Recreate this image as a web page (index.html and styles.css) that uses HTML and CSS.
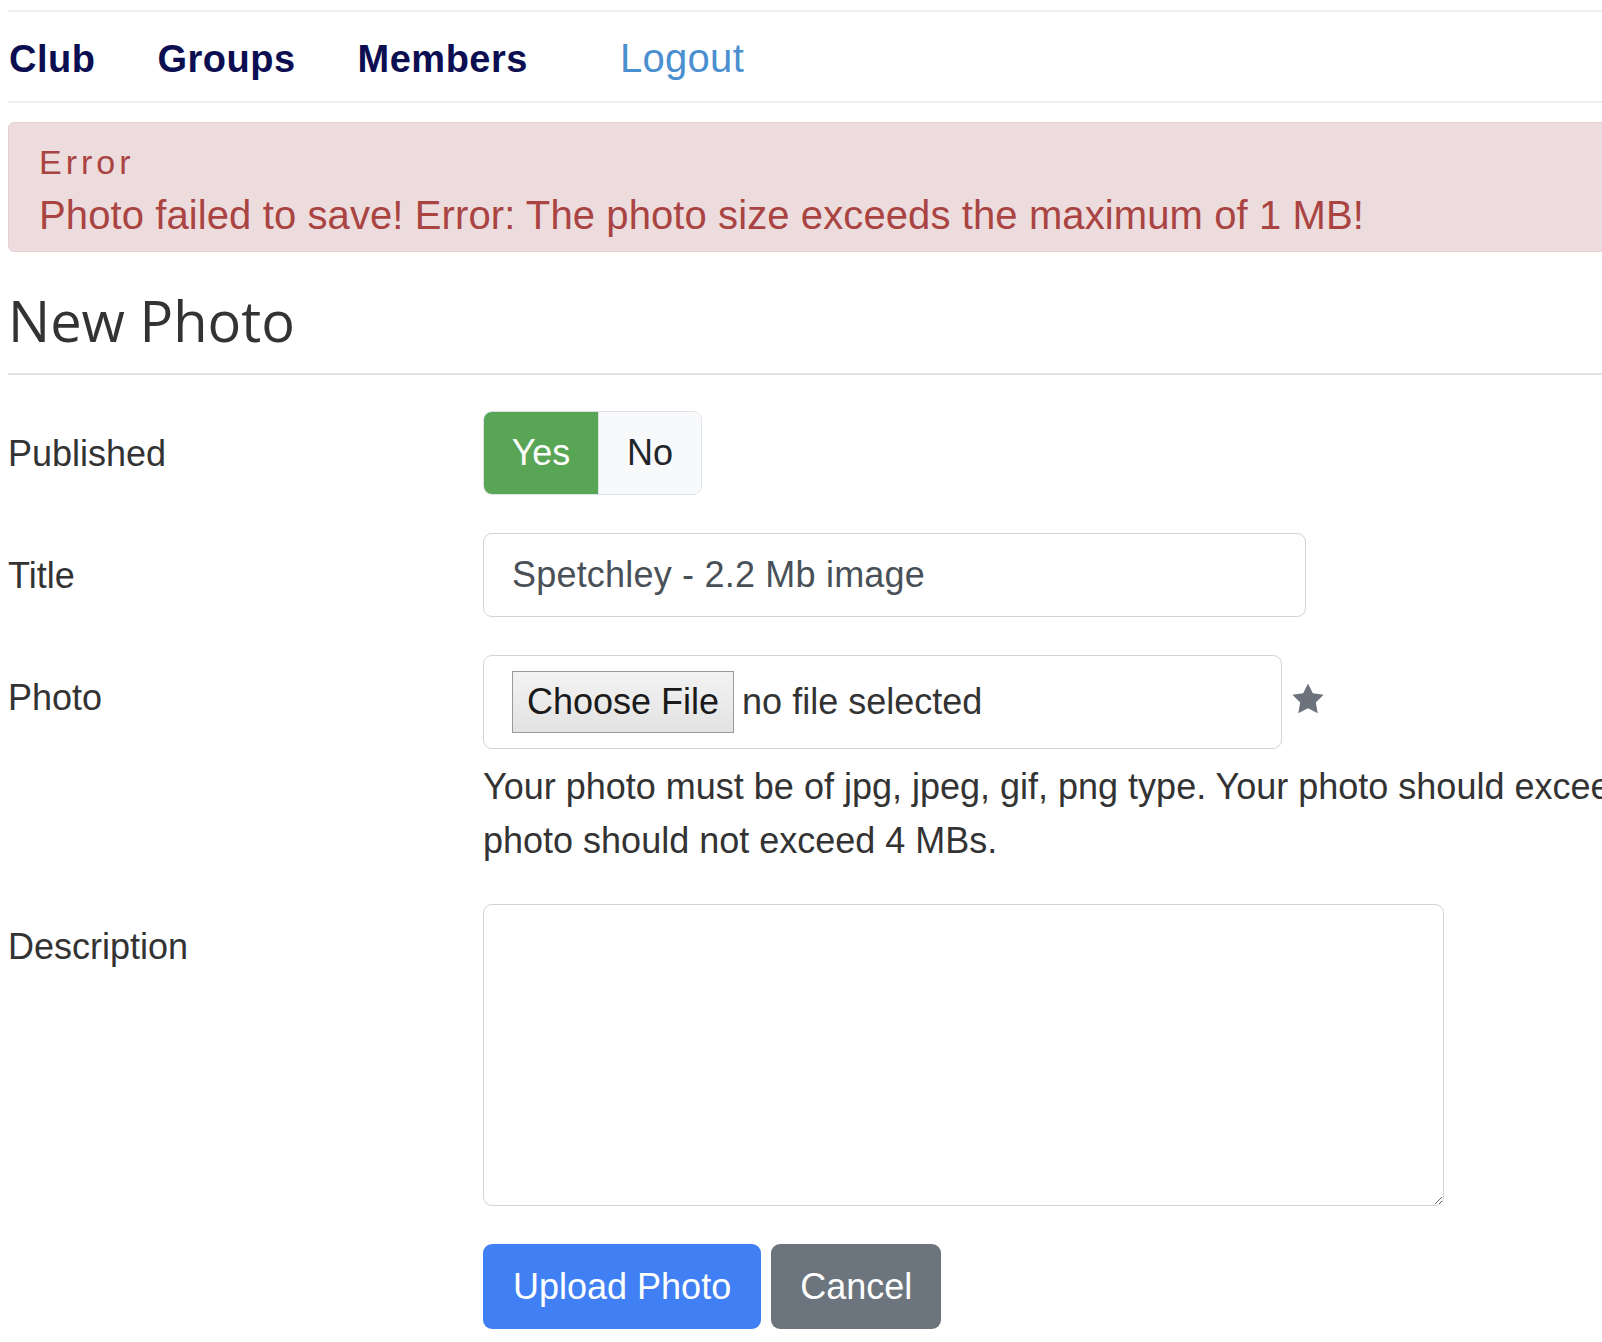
FILE: index.html
```html
<!DOCTYPE html>
<html lang="en">
<head>
<meta charset="utf-8">
<title>New Photo</title>
<link rel="stylesheet" href="styles.css">
</head>
<body>
<div class="page">
  <nav class="topnav">
    <a class="nav-link" href="#">Club</a>
    <a class="nav-link" href="#">Groups</a>
    <a class="nav-link" href="#">Members</a>
    <a class="nav-logout" href="#">Logout</a>
  </nav>

  <div class="alert">
    <div class="alert-title">Error</div>
    <div class="alert-msg">Photo failed to save! Error: The photo size exceeds the maximum of 1 MB!</div>
  </div>

  <h1 class="heading">New Photo</h1>
  <hr class="rule">

  <form class="form">
    <div class="row">
      <label class="col-label">Published</label>
      <div class="col-ctrl">
        <div class="toggle">
          <span class="toggle-btn toggle-yes">Yes</span>
          <span class="toggle-btn toggle-no">No</span>
        </div>
      </div>
    </div>

    <div class="row">
      <label class="col-label">Title</label>
      <div class="col-ctrl">
        <input class="text-input" type="text" value="Spetchley - 2.2 Mb image">
      </div>
    </div>

    <div class="row row-photo">
      <label class="col-label">Photo</label>
      <div class="col-ctrl">
        <div class="file-line">
          <div class="file-box">
            <span class="file-btn">Choose File</span>
            <span class="file-name">no file selected</span>
          </div>
          <svg class="star" viewBox="0 0 24 24" aria-hidden="true"><path d="M12 1.6l3.2 6.6 7.2 1-5.2 5.1 1.3 7.2L12 18.1l-6.5 3.4 1.3-7.2L1.6 9.2l7.2-1z"/></svg>
        </div>
        <p class="help">Your photo must be of jpg, jpeg, gif, png type. Your photo should exceed 100 KBs. Your<br>photo should not exceed 4 MBs.</p>
      </div>
    </div>

    <div class="row">
      <label class="col-label">Description</label>
      <div class="col-ctrl">
        <textarea class="textarea"></textarea>
      </div>
    </div>

    <div class="row">
      <div class="col-label"></div>
      <div class="col-ctrl actions">
        <button type="button" class="btn btn-primary">Upload Photo</button>
        <button type="button" class="btn btn-secondary">Cancel</button>
      </div>
    </div>
  </form>
</div>
</body>
</html>
```

FILE: styles.css
```css
html {
  overflow: hidden;
}

body {
  margin: 0;
  background: #fff;
  font-family: "Liberation Sans", Arial, sans-serif;
  color: #333;
}

.page {
  width: 1900px;
  padding-left: 8px;
  padding-top: 10px;
}

/* navigation */
.topnav {
  display: flex;
  align-items: baseline;
  border-top: 2px solid #eeeeee;
  border-bottom: 2px solid #eeeeee;
  padding: 18px 0 13px 1px;
  line-height: 57px;
}

.nav-link {
  font-size: 38px;
  font-weight: bold;
  letter-spacing: 0.5px;
  color: #0b0e50;
  text-decoration: none;
  margin-right: 62px;
}

.nav-link:nth-child(3) {
  margin-right: 92px;
}

.nav-logout {
  font-size: 40px;
  letter-spacing: 0.3px;
  color: #4a8fcf;
  text-decoration: none;
}

/* alert */
.alert {
  margin-top: 19px;
  background: #eddcdd;
  border: 1px solid #e6d0d3;
  border-radius: 6px;
  padding: 14px 30px 8px;
  color: #a94442;
}

.alert-title {
  font-size: 34px;
  line-height: 50px;
  letter-spacing: 4px;
}

.alert-msg {
  font-size: 40px;
  line-height: 56px;
  letter-spacing: 0.1px;
}

/* heading */
.heading {
  margin: 35px 0 0;
  font-family: "Open Sans", sans-serif;
  font-weight: 400;
  font-size: 56px;
  line-height: 67px;
  color: #333;
}

.rule {
  margin: 19px 0 0;
  border: 0;
  border-top: 2px solid #dfe3e6;
}

/* form */
.form {
  padding-top: 36px;
  font-size: 36px;
  line-height: 54px;
}

.row {
  display: flex;
  margin-bottom: 38px;
}

.row-photo {
  margin-bottom: 36px;
}

.col-label {
  width: 475px;
  flex: none;
  padding-top: 16px;
  color: #333;
}

.col-ctrl {
  flex: none;
}

/* toggle */
.toggle {
  display: inline-flex;
  border: 1px solid #dee2e6;
  border-radius: 9px;
  overflow: hidden;
  height: 84px;
  box-sizing: border-box;
}

.toggle-btn {
  display: flex;
  align-items: center;
  justify-content: center;
}

.toggle-yes {
  width: 114px;
  background: #59a556;
  color: #fff;
}

.toggle-no {
  width: 102px;
  background: #f8f9fa;
  border-left: 1px solid #dee2e6;
  color: #212529;
}

/* text input */
.text-input {
  display: block;
  box-sizing: border-box;
  width: 823px;
  height: 84px;
  margin: 0;
  padding: 0 28px;
  border: 1px solid #ced4da;
  border-radius: 9px;
  font-family: "Liberation Sans", Arial, sans-serif;
  font-size: 36px;
  letter-spacing: 0.2px;
  color: #495057;
  background: #fff;
}

/* file input */
.file-line {
  display: flex;
  align-items: center;
}

.file-box {
  display: flex;
  align-items: center;
  box-sizing: border-box;
  width: 799px;
  height: 94px;
  padding: 0 28px;
  border: 1px solid #ced4da;
  border-radius: 9px;
}

.file-btn {
  box-sizing: border-box;
  height: 62px;
  padding: 0 14px;
  display: flex;
  align-items: center;
  border: 1px solid #9a9a9a;
  background: linear-gradient(#f3f3f3, #e2e2e2);
  color: #1a1a1a;
}

.file-name {
  margin-left: 8px;
  color: #333;
}

.star {
  width: 36px;
  height: 36px;
  margin-left: 8px;
  margin-top: -6px;
  fill: #6c737c;
}

.help {
  margin: 11px 0 0;
  white-space: nowrap;
  color: #333;
}

/* textarea */
.textarea {
  display: block;
  box-sizing: border-box;
  width: 961px;
  height: 302px;
  margin: 0;
  border: 1px solid #ced4da;
  border-radius: 9px;
  font-family: "Liberation Sans", Arial, sans-serif;
  font-size: 36px;
}

/* buttons */
.actions {
  display: flex;
  gap: 10px;
}

.btn {
  box-sizing: border-box;
  height: 85px;
  padding: 0 30px;
  border: 0;
  border-radius: 9px;
  font-family: "Liberation Sans", Arial, sans-serif;
  font-size: 36px;
  color: #fff;
}

.btn-primary {
  background: #407ff4;
}

.btn-secondary {
  background: #6c757d;
  padding: 0 29px;
}
```
